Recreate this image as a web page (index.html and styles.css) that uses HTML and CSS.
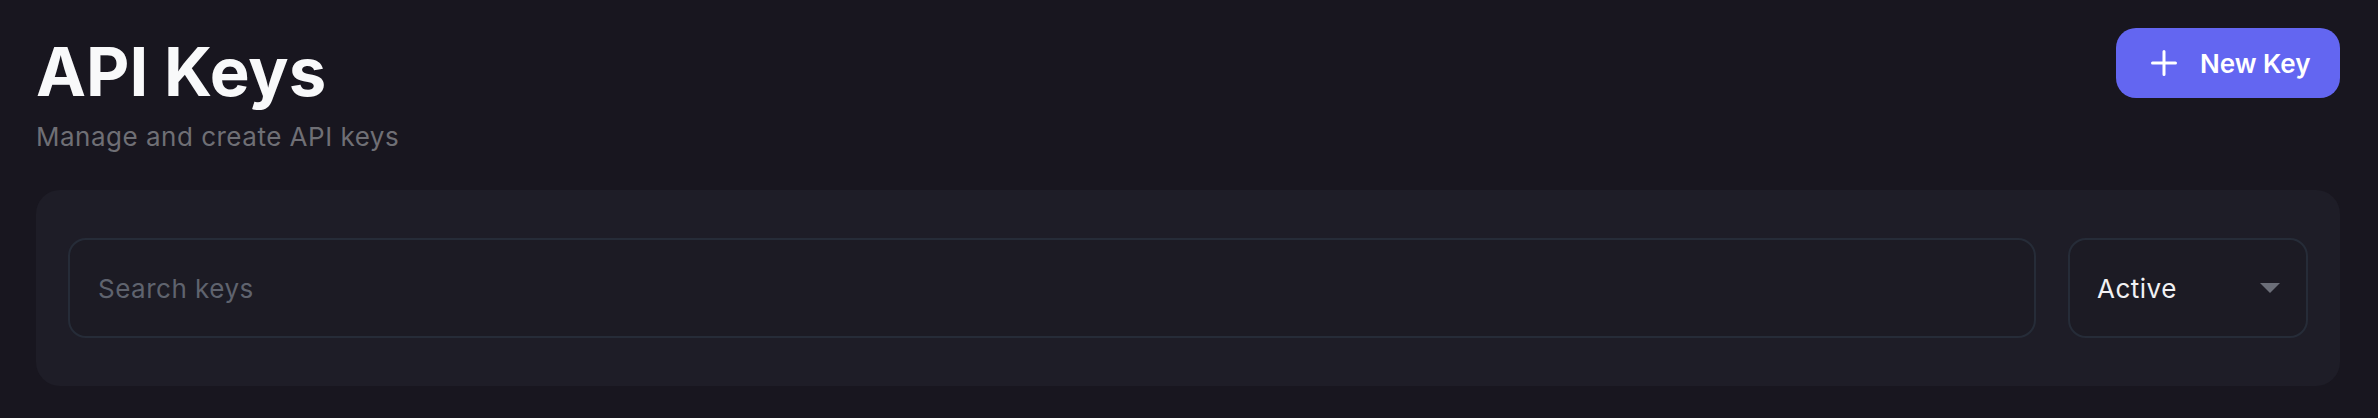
FILE: index.html
```html
<!DOCTYPE html>
<html lang="en">
<head>
<meta charset="utf-8">
<title>API Keys</title>
<link rel="stylesheet" href="styles.css">
</head>
<body>
<div class="page">
  <header class="header">
    <div class="heading">
      <h1 class="title">API Keys</h1>
      <p class="subtitle">Manage and create API keys</p>
    </div>
    <button class="new-key" type="button">
      <svg class="plus" width="26" height="26" viewBox="0 0 26 26" aria-hidden="true">
        <path d="M13 1.5V24.5M1.5 13H24.5" stroke="#ffffff" stroke-width="3" stroke-linecap="round" fill="none"/>
      </svg>
      <span>New Key</span>
    </button>
  </header>
  <section class="card">
    <div class="filters">
      <input class="search" type="text" placeholder="Search keys">
      <div class="select">
        <span class="select-value">Active</span>
        <svg class="caret" width="20" height="10" viewBox="0 0 20 10" aria-hidden="true">
          <path d="M0 0H20L10 10Z" fill="#6b6e78"/>
        </svg>
      </div>
    </div>
  </section>
</div>
</body>
</html>
```
FILE: styles.css
```css
* { box-sizing: border-box; }
html, body { margin: 0; padding: 0; }
body {
  background: #18161f;
  font-family: Inter, "Noto Sans", sans-serif;
  width: 2378px;
  height: 418px;
  overflow: hidden;
}
.page {
  padding: 28px 38px 0 36px;
}
.header {
  display: flex;
  justify-content: space-between;
  align-items: flex-start;
}
.heading {
  padding-top: 4px;
}
.title {
  margin: 0;
  font-size: 67px;
  line-height: 80px;
  font-weight: 700;
  color: #f8f9fa;
}
.subtitle {
  margin: 8px 0 0;
  font-size: 26px;
  line-height: 34px;
  letter-spacing: 0.5px;
  color: #6f6f75;
}
.new-key {
  display: flex;
  align-items: center;
  gap: 23px;
  width: 224px;
  height: 70px;
  padding: 0 0 0 35px;
  border: none;
  border-radius: 20px;
  background: #6366f1;
  color: #ffffff;
  font-family: inherit;
  font-size: 26px;
  font-weight: 600;
  white-space: nowrap;
  cursor: pointer;
}
.plus { display: block; flex: none; }
.card {
  margin-top: 36px;
  background: #1e1d27;
  border-radius: 24px;
  padding: 48px 32px;
}
.filters {
  display: flex;
  gap: 32px;
}
.search {
  flex: 1;
  height: 100px;
  padding: 0 28px;
  background: #1c1b24;
  border: 2px solid #262c38;
  border-radius: 18px;
  color: #f1f1f3;
  font-family: inherit;
  font-size: 26px;
  letter-spacing: 0.5px;
  outline: none;
}
.search::placeholder {
  color: #5f636e;
}
.select {
  width: 240px;
  height: 100px;
  display: flex;
  align-items: center;
  justify-content: space-between;
  padding: 0 26px 0 27px;
  background: #1c1b24;
  border: 2px solid #262c38;
  border-radius: 18px;
}
.select-value {
  color: #f1f1f3;
  font-size: 26px;
  letter-spacing: 0.5px;
}
.caret { display: block; }
```
